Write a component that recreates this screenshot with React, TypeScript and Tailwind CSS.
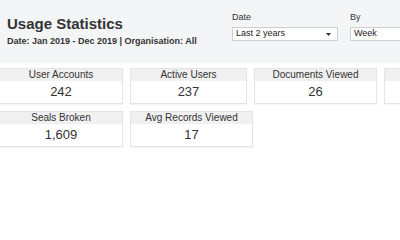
import React from "react";

type Stat = { label: string; value: string; w: string };

const rowOne: Stat[] = [
  { label: "User Accounts", value: "242", w: "w-[124px]" },
  { label: "Active Users", value: "237", w: "w-[117px]" },
  { label: "Documents Viewed", value: "26", w: "w-[123px]" },
  // fourth card runs off the right edge; its text is out of view
  { label: "", value: "", w: "w-[123px]" },
];

const rowTwo: Stat[] = [
  { label: "Seals Broken", value: "1,609", w: "w-[124px]" },
  { label: "Avg Records Viewed", value: "17", w: "w-[123px]" },
];

function StatCard({ stat }: { stat: Stat }) {
  return (
    <div className={`${stat.w} shrink-0 border border-[#e4e4e4] bg-white shadow-[0_1px_1px_rgba(0,0,0,0.04)]`}>
      <div className="h-[12px] bg-[#f0f0f0] text-center text-[10px] leading-[12px] text-[#333]">
        {stat.label}
      </div>
      <div className="h-[22px] text-center text-[13px] leading-[22px] text-[#333]">
        {stat.value}
      </div>
    </div>
  );
}

function Select({ value, width, arrow }: { value: string; width: string; arrow?: boolean }) {
  return (
    <div
      className={`${width} mt-[4px] h-[14px] flex items-center justify-between border border-[#cfcfcf] bg-white pl-[3px] pr-[6px] text-[9px] text-[#222]`}
    >
      <span>{value}</span>
      {arrow && (
        <svg width="5" height="3" viewBox="0 0 5 3">
          <path d="M0 0h5L2.5 3z" fill="#333" />
        </svg>
      )}
    </div>
  );
}

export default function App() {
  return (
    <div className="w-[400px] h-[240px] overflow-hidden bg-white font-['Liberation_Sans',Arial,sans-serif] text-[#333]">
      {/* Page header with filters */}
      <header className="h-[63px] bg-[#f4f5f7] flex pl-[7px]">
        <div className="w-[225px] shrink-0 pt-[15px]">
          <h1 className="text-[15px] font-bold leading-[18px] whitespace-nowrap">Usage Statistics</h1>
          <p className="mt-[2px] text-[9px] font-bold leading-[12px] whitespace-nowrap">
            Date: Jan 2019 - Dec 2019 | Organisation: All
          </p>
        </div>
        <div className="flex gap-[12px] pt-[11px] shrink-0">
          <div>
            <div className="text-[9px] leading-[12px] text-[#333]">Date</div>
            <Select value="Last 2 years" width="w-[106px]" arrow />
          </div>
          <div>
            <div className="text-[9px] leading-[12px] text-[#333]">By</div>
            <Select value="Week" width="w-[100px]" />
          </div>
        </div>
      </header>

      {/* Stat cards */}
      <section className="pt-[5px] -ml-px flex flex-col gap-[7px]">
        <div className="flex gap-[7px]">
          {rowOne.map((s, i) => (
            <StatCard key={i} stat={s} />
          ))}
        </div>
        <div className="flex gap-[7px]">
          {rowTwo.map((s, i) => (
            <StatCard key={i} stat={s} />
          ))}
        </div>
      </section>
    </div>
  );
}
